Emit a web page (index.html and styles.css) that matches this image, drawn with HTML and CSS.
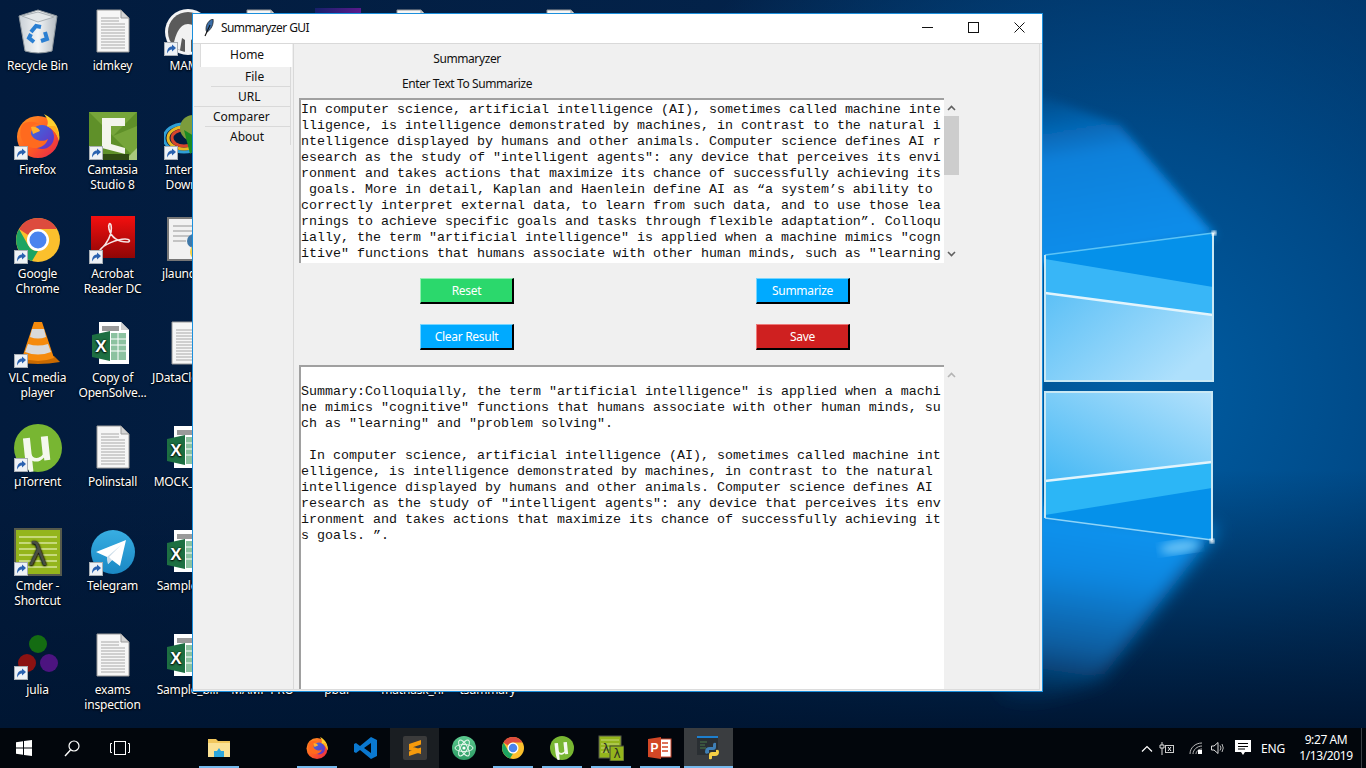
FILE: index.html
```html
<!DOCTYPE html>
<html lang="en">
<head>
  <meta charset="UTF-8">
  <title>Summaryzer GUI</title>
  <link rel="stylesheet" href="styles.css">
</head>
<body>
  <svg class="defs" width="0" height="0">
    <defs>
      <linearGradient id="paneTop" x1="0" y1="0" x2="1" y2="0.6"><stop offset="0" stop-color="#5cc0f6"/><stop offset="1" stop-color="#aee0fc"/></linearGradient>
      <linearGradient id="paneLow" x1="0" y1="1" x2="1" y2="0"><stop offset="0" stop-color="#45b8f4"/><stop offset="1" stop-color="#b2e1fc"/></linearGradient>
      <linearGradient id="beamTop" x1="0.5" y1="1" x2="0.3" y2="0"><stop offset="0" stop-color="#0d90ee"/><stop offset="0.6" stop-color="#0a80da"/><stop offset="1" stop-color="#0a6cc0" stop-opacity="0"/></linearGradient>
      <linearGradient id="beamLow" x1="0.5" y1="0" x2="0.35" y2="1"><stop offset="0" stop-color="#0a98f4"/><stop offset="0.35" stop-color="#0a88e2"/><stop offset="0.7" stop-color="#0a5c9e"/><stop offset="1" stop-color="#0b4a80" stop-opacity="0"/></linearGradient>
      <radialGradient id="wallGlow" cx="1130" cy="390" r="560" gradientUnits="userSpaceOnUse"><stop offset="0" stop-color="#005ea4"/><stop offset="0.45" stop-color="#004a88"/><stop offset="1" stop-color="#004a88" stop-opacity="0"/></radialGradient>
      <linearGradient id="wallBase" x1="0" y1="0" x2="1" y2="0"><stop offset="0" stop-color="#021b3d"/><stop offset="0.6" stop-color="#03234b"/><stop offset="1" stop-color="#012f60"/></linearGradient>
      <linearGradient id="wallFoot" x1="0" y1="0" x2="0" y2="1"><stop offset="0" stop-color="#001633" stop-opacity="0"/><stop offset="1" stop-color="#001633"/></linearGradient>
      <filter id="soft"><feGaussianBlur stdDeviation="5"/></filter>
      <filter id="softer"><feGaussianBlur stdDeviation="9"/></filter>
      <filter id="flare"><feGaussianBlur stdDeviation="1.500"/></filter>
      <linearGradient id="binFill" x1="0" y1="0" x2="1" y2="0"><stop offset="0" stop-color="#c9d0d6"/><stop offset="0.5" stop-color="#f2f4f5"/><stop offset="1" stop-color="#b4bcc3"/></linearGradient>
      <linearGradient id="ffOrange" x1="0" y1="0" x2="1" y2="1"><stop offset="0" stop-color="#ff9a22"/><stop offset="0.55" stop-color="#ff5a24"/><stop offset="1" stop-color="#e6224f"/></linearGradient>
      <linearGradient id="ffCore" x1="0" y1="0" x2="1" y2="1"><stop offset="0" stop-color="#3a6fe0"/><stop offset="1" stop-color="#6a2cc0"/></linearGradient>
      <linearGradient id="adobeRed" x1="0" y1="0" x2="0" y2="1"><stop offset="0" stop-color="#f40f0f"/><stop offset="1" stop-color="#8f0606"/></linearGradient>
      <linearGradient id="tgBlue" x1="0" y1="0" x2="0" y2="1"><stop offset="0" stop-color="#38aee2"/><stop offset="1" stop-color="#1a88c4"/></linearGradient>
      <linearGradient id="atomGreen" x1="0" y1="0" x2="0" y2="1"><stop offset="0" stop-color="#5cc98f"/><stop offset="1" stop-color="#2c9a64"/></linearGradient>

      <symbol id="doc" viewBox="0 0 48 48">
        <path d="M8 2H32L40 10V44H8Z" fill="#f6f6f6" stroke="#9a9a9a"/>
        <path d="M32 2V10H40Z" fill="#d4d4d4" stroke="#9a9a9a"/>
        <path d="M12 10H30M12 13H30M12 16H36M12 19H36M12 22H36M12 25H36M12 28H36M12 31H36M12 34H36M12 37H36M12 40H36" stroke="#a8a8a8"/>
      </symbol>
      <symbol id="bin" viewBox="0 0 48 48">
        <path d="M5 8L24 2L43 8L38 43Q24 47 11 43Z" fill="url(#binFill)" stroke="#8f979d"/>
        <path d="M8 8L24 4L40 9L24 14Z" fill="#e4e8ea" stroke="#a9b0b5"/>
        <path d="M17 24L22 18L27 19M31 24L33 31L27 33M20 34L15 30L17 26" fill="none" stroke="#2a7fd2" stroke-width="4"/>
      </symbol>
      <symbol id="firefox" viewBox="0 0 48 48">
        <circle cx="24" cy="25" r="21" fill="url(#ffOrange)"/>
        <circle cx="28" cy="25" r="12" fill="url(#ffCore)"/>
        <path d="M30 2C41 7 47 18 45 29C43 21 38 16 33 14C35 10 33 6 30 2Z" fill="#ffd02e"/>
        <path d="M33 14C40 17 44 23 45 29C46 24 44 18 41 14Z" fill="#ffb01e"/>
        <path d="M8 13C12 9 20 9 25 12C19 12 15 16 17 22C19 28 28 31 34 27C31 36 20 39 12 33C6 28 5 19 8 13Z" fill="#ff6a1e"/>
        <path d="M17 15C21 14 25 16 26 19L19 22Z" fill="#ffb02a"/>
      </symbol>
      <symbol id="camtasia" viewBox="0 0 48 48">
        <rect width="48" height="48" fill="#5f9029"/>
        <path d="M0 0L24 24L48 0ZM48 48L24 24L48 14Z" fill="#76a53a"/>
        <path d="M36 48L48 36V48Z" fill="#a9c97d"/>
        <rect y="42" width="40" height="6" fill="#2f4a12"/>
        <path d="M13 6H36V14H22V32L36 36V42L13 36Z" fill="#f3f5ec"/>
      </symbol>
      <symbol id="idm" viewBox="0 0 48 48">
        <ellipse cx="20" cy="26" rx="20" ry="14" fill="none" stroke="#2f9fd6" stroke-width="3"/>
        <ellipse cx="20" cy="26" rx="16" ry="11" fill="none" stroke="#e8b824" stroke-width="3"/>
        <ellipse cx="20" cy="26" rx="12" ry="8" fill="none" stroke="#d8452c" stroke-width="3"/>
        <circle cx="29" cy="16" r="13" fill="#7c9c3c"/>
        <path d="M20 18L40 30L26 42Z" fill="#1b8a22"/>
      </symbol>
      <symbol id="mamp" viewBox="0 0 48 48">
        <circle cx="24" cy="24" r="23" fill="#f4f4f4"/>
        <circle cx="24" cy="24" r="20" fill="#5a5a5a"/>
        <path d="M9 40C11 28 15 16 24 16C33 16 37 28 39 40L32 42L30 30L27 32V44H21V32L18 30L16 42Z" fill="#f2f2f2"/>
      </symbol>
      <symbol id="chrome" viewBox="0 0 48 48">
        <circle cx="24" cy="24" r="22" fill="#fbc02d"/>
        <path d="M24 2A22 22 0 0 1 43 13H24A11 11 0 0 0 14 19L5 13A22 22 0 0 1 24 2Z" fill="#dd4b3e"/>
        <path d="M5 13L14 29A11 11 0 0 0 24 35L18 45A22 22 0 0 1 5 13Z" fill="#1da462"/>
        <circle cx="24" cy="24" r="11" fill="#fff"/>
        <circle cx="24" cy="24" r="8.500" fill="#4a84ee"/>
      </symbol>
      <symbol id="acrobat" viewBox="0 0 48 48">
        <rect x="2" width="44" height="42" fill="url(#adobeRed)"/>
        <path d="M12 33C17 29 24 18 22 9C21 6 19 8 20 13C22 22 30 26 38 26C42 26 41 23 36 23C28 23 14 29 11 34C10 36 11 36 12 33Z" fill="none" stroke="#f6e4e4" stroke-width="1.600"/>
      </symbol>
      <symbol id="pydoc" viewBox="0 0 48 48">
        <path d="M4 2H34L40 8V44H4Z" fill="#f2f2f2" stroke="#777" stroke-width="2"/>
        <path d="M9 10H30M9 15H30M9 20H26M9 25H22" stroke="#c4c4c4" stroke-width="2"/>
        <circle cx="30" cy="25" r="7" fill="#3f78a8"/>
        <circle cx="34" cy="36" r="8" fill="#f5cf45"/>
      </symbol>
      <symbol id="vlc" viewBox="0 0 48 48">
        <path d="M2 42L8 36H40L46 42Q24 46 2 42Z" fill="#c96a00"/>
        <path d="M20 2H28L40 38Q24 44 8 38Z" fill="#f58a0c"/>
        <path d="M18 9H30L32 17Q24 20 16 17ZM14 24Q24 27 34 24L37 32Q24 37 11 32Z" fill="#d9d9d9"/>
      </symbol>
      <symbol id="excel" viewBox="0 0 48 48">
        <path d="M10 2H32L40 10V44H10Z" fill="#fff"/>
        <path d="M32 2V10H40Z" fill="#cfcfcf"/>
        <path d="M13 6H30V11H13Z" fill="#9a9a9a"/>
        <rect x="22" y="13" width="15" height="27" fill="#8cc2a0"/>
        <path d="M22 19H37M22 25H37M22 31H37M29 13V40" stroke="#fff"/>
        <path d="M3 15L21 11V41L3 37Z" fill="#1d6f42"/>
        <text x="12" y="32" class="excel-x">X</text>
      </symbol>
      <symbol id="utorrent" viewBox="0 0 48 48">
        <circle cx="24" cy="24" r="24" fill="#78b632"/>
        <path d="M10 13H17V29C17 35 25 35 28 31V13H35V37H29V34C25 38 20 38 17 36V47H13C11 42 10 36 10 30Z" fill="#f4f8ee" transform="rotate(-6 24 24)"/>
      </symbol>
      <symbol id="cmder" viewBox="0 0 48 48">
        <rect x="1" y="1" width="46" height="46" fill="#94b51c" stroke="#565a4c" stroke-width="2"/>
        <path d="M5 9H43M5 15H43M5 21H43M5 27H43M5 33H43M5 39H43" stroke="#c6d97a" stroke-width="2"/>
        <text x="24" y="37" class="lambda">λ</text>
      </symbol>
      <symbol id="telegram" viewBox="0 0 48 48">
        <circle cx="24" cy="24" r="22" fill="url(#tgBlue)"/>
        <path d="M7 24L37 12L31 38L23 32L19 36L18 29Z" fill="#fff"/>
        <path d="M18 29L19 36L23 32L20 29L32 17Z" fill="#c9dbe8"/>
      </symbol>
      <symbol id="julia" viewBox="0 0 48 48">
        <circle cx="24" cy="12" r="9" fill="#146c12"/>
        <circle cx="13" cy="31" r="9" fill="#8b1212"/>
        <circle cx="35" cy="31" r="9" fill="#4c1480"/>
      </symbol>
      <symbol id="badge" viewBox="0 0 14 14">
        <rect x="0.500" y="0.500" width="13" height="13" fill="#eef2f6" stroke="#a8aeb4"/>
        <path d="M3 11.500C3 7 5 4.500 8 4.500V2.500L12 6L8 9.500V7.500C6 7.500 4.500 9 3 11.500Z" fill="#2a62b0"/>
      </symbol>
      <symbol id="folder" viewBox="0 0 24 24">
        <path d="M1 3H9L11 5H23V21H1Z" fill="#f1c65c"/>
        <path d="M1 7H23V21H1Z" fill="#fbe195"/>
        <path d="M7 21V15H10L12 12L14 15H17V21Z" fill="#2ea6dc"/>
      </symbol>
      <symbol id="vscode" viewBox="0 0 24 24">
        <path d="M17 1L23 4V20L17 23L6 14L2 17L0 16V8L2 7L6 10ZM17 7L10 12L17 17Z" fill="#0a78d0"/>
      </symbol>
      <symbol id="sublime" viewBox="0 0 24 24">
        <rect width="24" height="24" rx="2" fill="#3b3b3b"/>
        <path d="M6 8L18 4V8.500L6 12.500ZM6 9.500L18 13.500V18L6 14ZM6 15.500L18 11.500V16L6 20Z" fill="#f59a0c"/>
      </symbol>
      <symbol id="atom" viewBox="0 0 24 24">
        <circle cx="12" cy="12" r="12" fill="url(#atomGreen)"/>
        <ellipse cx="12" cy="12" rx="9" ry="3.500" fill="none" stroke="#e6f6ec" transform="rotate(60 12 12)"/>
        <ellipse cx="12" cy="12" rx="9" ry="3.500" fill="none" stroke="#e6f6ec" transform="rotate(-60 12 12)"/>
        <ellipse cx="12" cy="12" rx="9" ry="3.500" fill="none" stroke="#e6f6ec"/>
        <circle cx="12" cy="12" r="1.600" fill="#fff"/>
      </symbol>
      <symbol id="cmderbar" viewBox="0 0 26 26">
        <rect x="1" y="1" width="22" height="22" fill="#94b51c" stroke="#565a4c"/>
        <path d="M3 5H21M3 9H21M3 13H21M3 17H21" stroke="#c6d97a"/>
        <rect x="12" y="11" width="14" height="15" fill="#94b51c" stroke="#3f4436"/>
        <text x="19" y="23" class="lambda-sm">λ</text>
        <text x="8" y="18" class="lambda-sm">λ</text>
      </symbol>
      <symbol id="ppt" viewBox="0 0 24 24">
        <rect x="10" y="3" width="13" height="18" fill="#fff" stroke="#c8452a"/>
        <path d="M14 7H20M14 11H20M14 15H20" stroke="#d24726" stroke-width="1.500"/>
        <path d="M0 3L13 1V23L0 21Z" fill="#d24726"/>
        <text x="6.500" y="16" class="ppt-p">P</text>
      </symbol>
      <symbol id="pyapp" viewBox="0 0 24 24">
        <rect x="0" y="1" width="21" height="18" fill="#2a2f33"/>
        <rect x="0" y="0" width="21" height="2" fill="#1d7fce"/>
        <path d="M3 6H10M3 9H8M3 12H9" stroke="#4a7a4a"/>
        <path d="M8 16Q8 11 13 11H16V9Q16 6 19 7V11Q19 14 16 14H12V17Q8 19 8 16Z" fill="#3f7fb5"/>
        <path d="M22 16Q22 20 18 20H15V22Q15 24 12 23V19Q12 16 15 16H19V14Q22 13 22 16Z" fill="#f5cf45"/>
      </symbol>
    </defs>
  </svg>

  <div class="desktop">
    <svg class="wallpaper" viewBox="0 0 1366 728" width="1366" height="728">
      <rect width="1366" height="728" fill="url(#wallBase)"/>
      <rect width="1366" height="728" fill="url(#wallGlow)"/>
      <rect y="470" width="1366" height="258" fill="url(#wallFoot)"/>
      <polygon points="1000,80 1120,125 1216,236 1000,270" fill="url(#beamTop)" filter="url(#soft)"/>
      <polygon points="1000,500 1218,528 1100,680 1000,715" fill="url(#beamLow)" filter="url(#softer)"/>
      <polygon points="1045,255 1213,233 1213,381 1045,381" fill="#0591ea"/>
      <polygon points="1045,259 1213,287 1213,381 1045,381" fill="#38b6f7"/>
      <polygon points="1045,293 1213,315 1213,381 1045,381" fill="url(#paneTop)"/>
      <path d="M1045 293L1213 315" stroke="#e2f4fc" stroke-width="2.500"/>
      <path d="M1045 255L1213 233" stroke="#5cc4f6" stroke-width="1.500"/>
      <path d="M1045 255V381H1213V233" fill="none" stroke="#c9e8f4" stroke-width="2"/>
      <polygon points="1045,392 1212,392 1212,540 1045,518" fill="#0591ea"/>
      <polygon points="1045,392 1212,392 1212,488 1045,515" fill="#2cb6f6"/>
      <polygon points="1045,392 1212,392 1212,462 1045,481" fill="url(#paneLow)"/>
      <path d="M1045 481L1212 462" stroke="#e2f4fc" stroke-width="2.500"/>
      <path d="M1045 518L1212 540" stroke="#8ed4f8" stroke-width="1.500"/>
      <path d="M1045 518V392H1212V540" fill="none" stroke="#c9e8f4" stroke-width="2"/>
      <ellipse cx="1180" cy="547" rx="20" ry="6" fill="#6cc4f6" filter="url(#soft)" transform="rotate(-8 1180 547)"/>
      <circle cx="1214" cy="233" r="2.500" fill="#fff" filter="url(#flare)"/>
      <circle cx="1212" cy="541" r="2.500" fill="#fff" filter="url(#flare)"/>
    </svg>

    <div class="icons">
      <div class="item"><div class="ico"><svg><use href="#bin"/></svg></div><span>Recycle Bin</span></div>
      <div class="item"><div class="ico"><svg><use href="#firefox"/></svg><svg class="badge"><use href="#badge"/></svg></div><span>Firefox</span></div>
      <div class="item"><div class="ico"><svg><use href="#chrome"/></svg><svg class="badge"><use href="#badge"/></svg></div><span>Google Chrome</span></div>
      <div class="item"><div class="ico"><svg><use href="#vlc"/></svg><svg class="badge"><use href="#badge"/></svg></div><span>VLC media player</span></div>
      <div class="item"><div class="ico"><svg><use href="#utorrent"/></svg><svg class="badge"><use href="#badge"/></svg></div><span>µTorrent</span></div>
      <div class="item"><div class="ico"><svg><use href="#cmder"/></svg><svg class="badge"><use href="#badge"/></svg></div><span>Cmder - Shortcut</span></div>
      <div class="item"><div class="ico"><svg><use href="#julia"/></svg><svg class="badge"><use href="#badge"/></svg></div><span>julia</span></div>

      <div class="item"><div class="ico"><svg><use href="#doc"/></svg></div><span>idmkey</span></div>
      <div class="item"><div class="ico"><svg><use href="#camtasia"/></svg><svg class="badge"><use href="#badge"/></svg></div><span>Camtasia Studio 8</span></div>
      <div class="item"><div class="ico"><svg><use href="#acrobat"/></svg><svg class="badge"><use href="#badge"/></svg></div><span>Acrobat Reader DC</span></div>
      <div class="item"><div class="ico"><svg><use href="#excel"/></svg></div><span>Copy of OpenSolve...</span></div>
      <div class="item"><div class="ico"><svg><use href="#doc"/></svg></div><span>Polinstall</span></div>
      <div class="item"><div class="ico"><svg><use href="#telegram"/></svg><svg class="badge"><use href="#badge"/></svg></div><span>Telegram</span></div>
      <div class="item"><div class="ico"><svg><use href="#doc"/></svg></div><span>exams inspection</span></div>

      <div class="item"><div class="ico"><svg><use href="#mamp"/></svg><svg class="badge"><use href="#badge"/></svg></div><span>MAMP</span></div>
      <div class="item"><div class="ico"><svg><use href="#idm"/></svg><svg class="badge"><use href="#badge"/></svg></div><span>Internet Downl...</span></div>
      <div class="item"><div class="ico"><svg><use href="#pydoc"/></svg></div><span>jlauncher</span></div>
      <div class="item"><div class="ico"><svg><use href="#doc"/></svg></div><span>JDataCleaner</span></div>
      <div class="item"><div class="ico"><svg><use href="#excel"/></svg></div><span>MOCK_DATA</span></div>
      <div class="item"><div class="ico"><svg><use href="#excel"/></svg></div><span>Sample_bill</span></div>
      <div class="item"><div class="ico"><svg><use href="#excel"/></svg></div><span>Sample_bill</span></div>

      <div class="item"><div class="ico"><svg><use href="#doc"/></svg></div></div>
      <div class="item last"><span>MAMP PRO</span></div>
      <div class="item"><div class="ico"><div class="peek"></div></div></div>
      <div class="item last"><span>pbur</span></div>
      <div class="item"><div class="ico"><svg><use href="#doc"/></svg></div></div>
      <div class="item last"><span>mathask_ni</span></div>
      <div class="item last"><span>tsummary</span></div>
      <div class="item"><div class="ico"><svg><use href="#doc"/></svg></div></div>
    </div>

    <div class="window">
      <div class="titlebar">
        <svg class="feather" width="10" height="18" viewBox="0 0 10 18">
          <path d="M9 0C5 1 2 5 2 10C2 11 2 12 3 13C7 11 10 5 9 0Z" fill="#3b6ea8" stroke="#111" stroke-width="0.700"/>
          <path d="M6 6L1 17" stroke="#111" stroke-width="1.100"/>
        </svg>
        <span class="title">Summaryzer GUI</span>
        <div class="controls">
          <div class="ctl"><svg width="11" height="11" viewBox="0 0 11 11"><path d="M0 5.500H11" stroke="#111"/></svg></div>
          <div class="ctl"><svg width="11" height="11" viewBox="0 0 11 11"><rect x="0.500" y="0.500" width="10" height="10" fill="none" stroke="#111"/></svg></div>
          <div class="ctl"><svg width="11" height="11" viewBox="0 0 11 11"><path d="M0.500 0.500L10.500 10.500M10.500 0.500L0.500 10.500" stroke="#111"/></svg></div>
        </div>
      </div>
      <div class="client">
        <div class="sidebar">
          <div class="tab-home">Home</div>
          <div class="tabs">
            <div class="tab tab-file">File</div>
            <div class="tab tab-url">URL</div>
            <div class="tab tab-comparer">Comparer</div>
            <div class="tab tab-about">About</div>
          </div>
        </div>
        <div class="main">
          <div class="heading">Summaryzer</div>
          <div class="heading heading-sub">Enter Text To Summarize</div>
          <div class="textrow">
            <pre class="textbox box-input">In computer science, artificial intelligence (AI), sometimes called machine inte
lligence, is intelligence demonstrated by machines, in contrast to the natural i
ntelligence displayed by humans and other animals. Computer science defines AI r
esearch as the study of "intelligent agents": any device that perceives its envi
ronment and takes actions that maximize its chance of successfully achieving its
 goals. More in detail, Kaplan and Haenlein define AI as “a system’s ability to 
correctly interpret external data, to learn from such data, and to use those lea
rnings to achieve specific goals and tasks through flexible adaptation”. Colloqu
ially, the term "artificial intelligence" is applied when a machine mimics "cogn
itive" functions that humans associate with other human minds, such as "learning</pre>
            <div class="scrollbar">
              <svg class="arrow" width="9" height="6" viewBox="0 0 9 6"><path d="M1 5L4.500 1.500L8 5" fill="none" stroke="#606060" stroke-width="1.600"/></svg>
              <div class="thumb"></div>
              <svg class="arrow arrow-down" width="9" height="6" viewBox="0 0 9 6"><path d="M1 1L4.500 4.500L8 1" fill="none" stroke="#606060" stroke-width="1.600"/></svg>
            </div>
          </div>
          <div class="buttons">
            <button class="btn btn-green">Reset</button>
            <button class="btn btn-blue">Summarize</button>
            <button class="btn btn-blue">Clear Result</button>
            <button class="btn btn-red">Save</button>
          </div>
          <div class="textrow textrow-result">
            <pre class="textbox box-result">

Summary:Colloquially, the term "artificial intelligence" is applied when a machi
ne mimics "cognitive" functions that humans associate with other human minds, su
ch as "learning" and "problem solving".

 In computer science, artificial intelligence (AI), sometimes called machine int
elligence, is intelligence demonstrated by machines, in contrast to the natural 
intelligence displayed by humans and other animals. Computer science defines AI 
research as the study of "intelligent agents": any device that perceives its env
ironment and takes actions that maximize its chance of successfully achieving it
s goals. ”.</pre>
            <div class="scrollbar">
              <svg class="arrow" width="9" height="6" viewBox="0 0 9 6"><path d="M1 5L4.500 1.500L8 5" fill="none" stroke="#b4b4b4" stroke-width="1.600"/></svg>
            </div>
          </div>
        </div>
      </div>
    </div>
  </div>

  <div class="taskbar">
    <div class="start">
      <div class="sys"><svg width="16" height="16" viewBox="0 0 16 16"><path d="M0 2.300L7 1.300V7.500H0ZM8 1.100L16 0V7.500H8ZM0 8.500H7V14.700L0 13.700ZM8 8.500H16V16L8 14.900Z" fill="#fff"/></svg></div>
      <div class="sys"><svg width="16" height="17" viewBox="0 0 16 17"><circle cx="10" cy="6" r="5" fill="none" stroke="#fff" stroke-width="1.200"/><path d="M6.500 10L1 16" stroke="#fff" stroke-width="1.400"/></svg></div>
      <div class="sys"><svg width="20" height="14" viewBox="0 0 20 14"><rect x="4.500" y="0.500" width="11" height="13" fill="none" stroke="#fff"/><path d="M2 2.500H0.500V11.500H2M18 2.500H19.500V11.500H18" fill="none" stroke="#fff"/></svg></div>
    </div>
    <div class="apps">
      <div class="app open"><svg><use href="#folder"/></svg></div>
      <div class="app"></div>
      <div class="app open"><svg><use href="#firefox"/></svg></div>
      <div class="app"><svg><use href="#vscode"/></svg></div>
      <div class="app active"><svg><use href="#sublime"/></svg></div>
      <div class="app"><svg><use href="#atom"/></svg></div>
      <div class="app open"><svg><use href="#chrome"/></svg></div>
      <div class="app open"><svg><use href="#utorrent"/></svg></div>
      <div class="app open"><svg class="cmderbar"><use href="#cmderbar"/></svg></div>
      <div class="app open"><svg><use href="#ppt"/></svg></div>
      <div class="app open current"><svg><use href="#pyapp"/></svg></div>
    </div>
    <div class="tray">
      <svg class="tray-ico chevron" width="12" height="7" viewBox="0 0 12 7"><path d="M1 6.500L6 1.500L11 6.500" fill="none" stroke="#fff" stroke-width="1.200"/></svg>
      <svg class="tray-ico power" width="16" height="13" viewBox="0 0 16 13"><path d="M3 0V3M1 3H5V6H1ZM3 6V13" fill="none" stroke="#ddd"/><rect x="6.500" y="3.500" width="8" height="7" fill="none" stroke="#ccc"/><path d="M9 5L12 9M12 5L9 9" stroke="#eee"/></svg>
      <svg class="tray-ico wifi" width="14" height="14" viewBox="0 0 14 14"><path d="M1 13C1 7 6 2 13 2M4 13C4 9 8 5 13 5M7 13C7 11 9 8 13 8" fill="none" stroke="#bbb"/><rect x="9" y="9" width="4" height="4" fill="#fff"/></svg>
      <svg class="tray-ico sound" width="15" height="14" viewBox="0 0 15 14"><path d="M0.500 5H3L7 1.500V12.500L3 9H0.500Z" fill="none" stroke="#ddd"/><path d="M9 4.500Q11 7 9 9.500M11 3Q13.500 7 11 11" fill="none" stroke="#bbb"/></svg>
      <svg class="tray-ico note" width="16" height="16" viewBox="0 0 16 16"><path d="M0 0H16V12H10L8 15L6 12H0Z" fill="#fff"/><path d="M3 3.500H13M3 6.500H13M3 9H10" stroke="#000"/></svg>
      <span class="lang">ENG</span>
      <div class="clock"><div>9:27 AM</div><div>1/13/2019</div></div>
      <div class="show-desktop"></div>
    </div>
  </div>
</body>
</html>
```

FILE: styles.css
```css
html, body {
  margin: 0;
  height: 768px;
  overflow: hidden;
  background: #021b3d;
  font-family: "Noto Sans", sans-serif;
  font-size: 12px;
}
.defs {
  position: absolute;
}
.excel-x {
  font: bold 17px "Liberation Sans", sans-serif;
  fill: #fff;
  text-anchor: middle;
}
.lambda {
  font: 32px "DejaVu Sans", sans-serif;
  fill: #4a4e42;
  text-anchor: middle;
}
.lambda-sm {
  font: 12px "DejaVu Sans", sans-serif;
  fill: #2c3024;
  text-anchor: middle;
}
.ppt-p {
  font: bold 12px "Liberation Sans", sans-serif;
  fill: #fff;
  text-anchor: middle;
}

.desktop {
  position: relative;
  height: 728px;
  overflow: hidden;
}
.wallpaper {
  position: absolute;
  left: 0;
  top: 0;
}

/* desktop icons, filled column by column */
.icons {
  position: relative;
  display: grid;
  grid-auto-flow: column;
  grid-template-rows: repeat(7, 104px);
  grid-auto-columns: 75px;
  padding-top: 2px;
}
.item {
  display: flex;
  flex-direction: column;
  align-items: center;
  padding-top: 6px;
  color: #fff;
  text-align: center;
  line-height: 15px;
  text-shadow: 0 1px 2px #000, 0 0 2px #000;
}
.item span {
  width: 72px;
  margin-top: 2px;
  letter-spacing: -0.2px;
}
.item.last {
  grid-row: 7;
}
.item.last span {
  margin-top: 50px;
}
.ico {
  position: relative;
  width: 48px;
  height: 48px;
}
.ico svg {
  width: 48px;
  height: 48px;
  display: block;
}
.ico svg.badge {
  position: absolute;
  left: 0;
  top: 34px;
  width: 14px;
  height: 14px;
}
.peek {
  width: 46px;
  height: 46px;
  margin: auto;
  background: linear-gradient(90deg, #16206a, #5a1a8c);
}

/* app window */
.window {
  position: absolute;
  left: 192px;
  top: 13px;
  width: 851px;
  height: 679px;
  box-sizing: border-box;
  border: 1px solid #1b8fdc;
  background: #f0f0f0;
  color: #111;
  display: flex;
  flex-direction: column;
}
.titlebar {
  height: 27px;
  flex: none;
  padding-bottom: 2px;
  background: #fff;
  border-bottom: 1px solid #d9d9d9;
  display: flex;
  align-items: center;
}
.feather {
  margin-left: 11px;
}
.title {
  margin-left: 7px;
  letter-spacing: -0.6px;
}
.controls {
  margin-left: auto;
  display: flex;
}
.ctl {
  width: 46px;
  height: 27px;
  display: flex;
  align-items: center;
  justify-content: center;
}
.client {
  flex: 1;
  display: flex;
  margin-right: 2px;
  margin-bottom: 1px;
  border-right: 1px solid #dcdcdc;
  border-bottom: 1px solid #dcdcdc;
  min-height: 0;
}
.sidebar {
  width: 100px;
  flex: none;
  border-right: 1px solid #d9d9d9;
}
.tab-home {
  margin-left: 7px;
  width: 92px;
  height: 23px;
  line-height: 22px;
  background: #fff;
  box-sizing: border-box;
  border-left: 1px solid #dcdcdc;
  padding-left: 29px;
}
.tabs {
  width: 97px;
  height: 78px;
  border-right: 1px solid #d9d9d9;
}
.tab {
  height: 20px;
  box-sizing: border-box;
  line-height: 20px;
  border-bottom: 1px solid #d9d9d9;
}
.tab-file {
  margin-left: 18px;
  padding-left: 34px;
}
.tab-url {
  margin-left: 1px;
  padding-left: 44px;
}
.tab-comparer {
  margin-left: 12px;
  padding-left: 8px;
}
.tab-about {
  padding-left: 37px;
  border-bottom: none;
}

.main {
  flex: 1;
  min-width: 0;
  padding: 7px 0 0 5px;
  display: flex;
  flex-direction: column;
}
.heading {
  width: 336px;
  text-align: center;
  line-height: 15px;
  letter-spacing: -0.4px;
}
.heading-sub {
  margin-top: 10px;
  margin-bottom: 7px;
}
.textrow {
  display: flex;
  height: 165px;
  flex: none;
}
.textrow-result {
  flex: 1;
  height: auto;
  min-height: 0;
}
.textbox {
  margin: 0;
  width: 645px;
  box-sizing: border-box;
  padding: 2px 0 0 0;
  background: #fff;
  border-top: 2px solid #a0a0a0;
  border-left: 2px solid #a0a0a0;
  font: 13.33px/16px "Liberation Mono", monospace;
  color: #111;
  overflow: hidden;
  white-space: pre;
}
.box-result {
  padding-top: 1px;
}
.scrollbar {
  position: relative;
  width: 15px;
  flex: none;
  display: flex;
  flex-direction: column;
  align-items: center;
}
.arrow {
  margin-top: 7px;
  flex: none;
}
.arrow-down {
  margin-top: auto;
  margin-bottom: 6px;
}
.thumb {
  width: 15px;
  height: 59px;
  margin-top: 5px;
  background: #cdcdcd;
}
.buttons {
  margin: 15px 0 15px 121px;
  display: grid;
  grid-template-columns: 94px 94px;
  column-gap: 242px;
  row-gap: 20px;
}
.btn {
  height: 26px;
  padding: 0;
  font: inherit;
  letter-spacing: -0.3px;
  color: #fff;
  border-style: solid;
  border-width: 1px 2px 2px 1px;
  border-right-color: #000;
  border-bottom-color: #000;
}
.btn-green {
  background: #2bd86c;
  border-top-color: #8ff0b0;
  border-left-color: #8ff0b0;
}
.btn-blue {
  background: #00aaff;
  border-top-color: #77d6ff;
  border-left-color: #77d6ff;
}
.btn-red {
  background: #cf2020;
  border-top-color: #ee7a7a;
  border-left-color: #ee7a7a;
}

/* taskbar */
.taskbar {
  height: 40px;
  background: #02060c;
  display: flex;
  color: #fff;
}
.start {
  display: flex;
  width: 194px;
  flex: none;
}
.sys {
  width: 48px;
  height: 40px;
  display: flex;
  align-items: center;
  justify-content: center;
}
.apps {
  display: flex;
}
.app {
  width: 49px;
  height: 40px;
  box-sizing: border-box;
  position: relative;
  display: flex;
  align-items: center;
  justify-content: center;
}
.app svg {
  width: 24px;
  height: 24px;
}
.app svg.cmderbar {
  width: 26px;
  height: 26px;
}
.app.open::after {
  content: "";
  position: absolute;
  left: 5px;
  right: 4px;
  bottom: 0;
  height: 2px;
  background: #76b9ed;
}
.active {
  background: #1a1e22;
}
.current {
  background: #3a3d40;
}
.app.current::after {
  left: 0;
  right: 0;
}
.tray {
  margin-left: auto;
  display: flex;
  align-items: center;
}
.tray-ico {
  flex: none;
}
.chevron {
  margin-right: 6px;
}
.power {
  margin-right: 14px;
}
.wifi {
  margin-right: 8px;
}
.sound {
  margin-right: 9px;
}
.note {
  margin-right: 10px;
}
.lang {
  width: 34px;
  letter-spacing: -0.2px;
}
.clock {
  width: 62px;
  text-align: center;
  line-height: 16px;
  letter-spacing: -0.4px;
}
.show-desktop {
  width: 1px;
  height: 40px;
  margin-left: 4px;
  margin-right: 4px;
  background: #3a3f44;
}
```
